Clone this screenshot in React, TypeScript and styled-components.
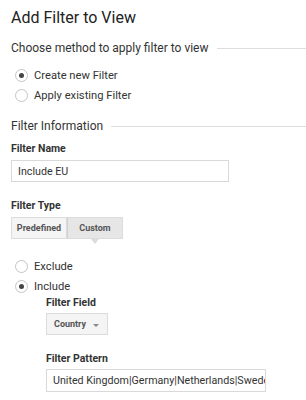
import styled, { createGlobalStyle } from 'styled-components';

const GlobalStyle = createGlobalStyle`
	html, body {
		margin: 0;
		padding: 0;
		background: #ffffff;
	}
	body {
		font-family: Roboto, "Liberation Sans", Arial, sans-serif;
		color: #222222;
	}
`;

const Page = styled.div`
	width: 306px;
	height: 400px;
	overflow: hidden;
	padding: 8px 0 0 11px;
	box-sizing: border-box;
`;

const Title = styled.h1`
	margin: 0;
	font-size: 16px;
	font-weight: 400;
	line-height: 20px;
	color: #222;
`;

const SectionHeader = styled.div<{ $top: number }>`
	display: flex;
	align-items: center;
	gap: 8px;
	margin-top: ${(p) => p.$top}px;
	font-size: 12px;
	line-height: 16px;
	color: #333;

	&::after {
		content: '';
		flex: 1;
		height: 1px;
		background: #dddddd;
	}
`;

const RadioList = styled.div<{ $top: number }>`
	display: flex;
	flex-direction: column;
	gap: 6px;
	margin-top: ${(p) => p.$top}px;
	padding-left: 4px;
`;

const RadioRow = styled.label`
	display: flex;
	align-items: center;
	gap: 6px;
	height: 14px;
	font-size: 11.2px;
	color: #333;
`;

const RadioCircle = styled.span<{ $checked?: boolean }>`
	display: flex;
	align-items: center;
	justify-content: center;
	width: 13px;
	height: 13px;
	box-sizing: border-box;
	border: 1px solid #c4c4c4;
	border-radius: 50%;
	background: #fff;

	&::after {
		content: '';
		display: ${(p) => (p.$checked ? 'block' : 'none')};
		width: 5px;
		height: 5px;
		border-radius: 50%;
		background: #444;
	}
`;

const FieldLabel = styled.div<{ $top: number }>`
	margin-top: ${(p) => p.$top}px;
	font-size: 10.5px;
	font-weight: 700;
	line-height: 14px;
	color: #333;
`;

const TextInput = styled.div<{ $width: number; $height: number; $top: number }>`
	margin-top: ${(p) => p.$top}px;
	width: ${(p) => p.$width}px;
	height: ${(p) => p.$height}px;
	box-sizing: border-box;
	border: 1px solid #d9d9d9;
	padding: 0 6px;
	display: flex;
	align-items: center;
	font-size: 10.7px;
	color: #333;
	white-space: nowrap;
	overflow: hidden;
`;

const Segmented = styled.div`
	display: flex;
	margin-top: 4px;
`;

const Segment = styled.div<{ $active?: boolean }>`
	position: relative;
	width: 56px;
	height: 22px;
	box-sizing: border-box;
	display: flex;
	align-items: center;
	justify-content: center;
	font-size: 9px;
	font-weight: 700;
	color: #555;
	background: ${(p) => (p.$active ? '#e6e6e6' : '#f4f4f4')};
	border: 1px solid #dcdcdc;
	& + & {
		border-left: 1px solid #d0d0d0;
	}

	${(p) =>
		p.$active &&
		`
		&::after {
			content: '';
			position: absolute;
			left: 50%;
			bottom: -6px;
			margin-left: -4px;
			border-left: 4px solid transparent;
			border-right: 4px solid transparent;
			border-top: 5px solid #dcdcdc;
		}
	`}
`;

const SubFields = styled.div`
	padding-left: 35px;
`;

const Dropdown = styled.div`
	margin-top: 3px;
	width: 62px;
	height: 22px;
	box-sizing: border-box;
	display: flex;
	align-items: center;
	justify-content: space-between;
	padding: 0 8px 0 7px;
	background: #f4f4f4;
	border: 1px solid #dcdcdc;
	font-size: 9px;
	font-weight: 700;
	color: #555;

	&::after {
		content: '';
		border-left: 3px solid transparent;
		border-right: 3px solid transparent;
		border-top: 3px solid #888;
		margin-top: 2px;
	}
`;

const App = () => {
	return (
		<Page>
			<GlobalStyle />
			<Title>Add Filter to View</Title>
			<SectionHeader $top={12}>Choose method to apply filter to view</SectionHeader>
			<RadioList $top={12}>
				<RadioRow>
					<RadioCircle $checked />
					Create new Filter
				</RadioRow>
				<RadioRow>
					<RadioCircle />
					Apply existing Filter
				</RadioRow>
			</RadioList>
			<SectionHeader $top={16}>Filter Information</SectionHeader>
			<FieldLabel $top={8}>Filter Name</FieldLabel>
			<TextInput $width={218} $height={22} $top={4}>
				Include EU
			</TextInput>
			<FieldLabel $top={17}>Filter Type</FieldLabel>
			<Segmented>
				<Segment>Predefined</Segment>
				<Segment $active>Custom</Segment>
			</Segmented>
			<RadioList $top={20}>
				<RadioRow>
					<RadioCircle />
					Exclude
				</RadioRow>
				<RadioRow>
					<RadioCircle $checked />
					Include
				</RadioRow>
			</RadioList>
			<SubFields>
				<FieldLabel $top={3}>Filter Field</FieldLabel>
				<Dropdown>Country</Dropdown>
				<FieldLabel $top={17}>Filter Pattern</FieldLabel>
				<TextInput $width={220} $height={23} $top={3}>
					United Kingdom|Germany|Netherlands|Sweden|France
				</TextInput>
			</SubFields>
		</Page>
	);
};

export default App;
